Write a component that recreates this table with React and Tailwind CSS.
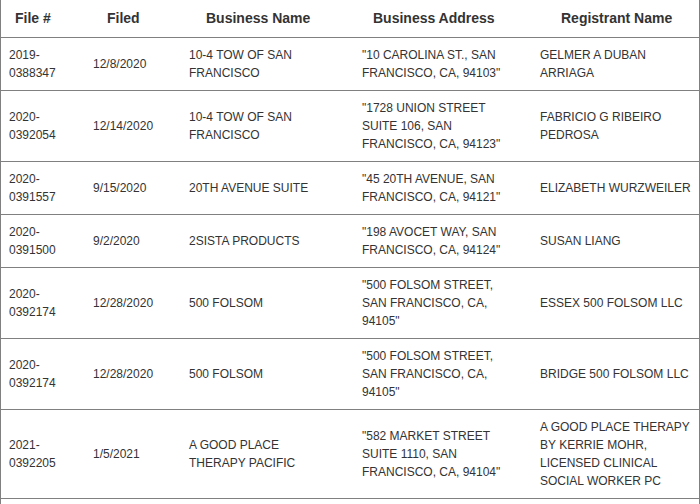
import React from "react";

const rows = [
  {
    file: "2019-0388347",
    filed: "12/8/2020",
    name: "10-4 TOW OF SAN FRANCISCO",
    address: '"10 CAROLINA ST., SAN FRANCISCO, CA, 94103"',
    registrant: "GELMER A DUBAN ARRIAGA",
  },
  {
    file: "2020-0392054",
    filed: "12/14/2020",
    name: "10-4 TOW OF SAN FRANCISCO",
    address: '"1728 UNION STREET SUITE 106, SAN FRANCISCO, CA, 94123"',
    registrant: "FABRICIO G RIBEIRO PEDROSA",
  },
  {
    file: "2020-0391557",
    filed: "9/15/2020",
    name: "20TH AVENUE SUITE",
    address: '"45 20TH AVENUE, SAN FRANCISCO, CA, 94121"',
    registrant: "ELIZABETH WURZWEILER",
  },
  {
    file: "2020-0391500",
    filed: "9/2/2020",
    name: "2SISTA PRODUCTS",
    address: '"198 AVOCET WAY, SAN FRANCISCO, CA, 94124"',
    registrant: "SUSAN LIANG",
  },
  {
    file: "2020-0392174",
    filed: "12/28/2020",
    name: "500 FOLSOM",
    address: '"500 FOLSOM STREET, SAN FRANCISCO, CA, 94105"',
    registrant: "ESSEX 500 FOLSOM LLC",
  },
  {
    file: "2020-0392174",
    filed: "12/28/2020",
    name: "500 FOLSOM",
    address: '"500 FOLSOM STREET, SAN FRANCISCO, CA, 94105"',
    registrant: "BRIDGE 500 FOLSOM LLC",
  },
  {
    file: "2021-0392205",
    filed: "1/5/2021",
    name: "A GOOD PLACE THERAPY PACIFIC",
    address: '"582 MARKET STREET SUITE 1110, SAN FRANCISCO, CA, 94104"',
    registrant: "A GOOD PLACE THERAPY BY KERRIE MOHR, LICENSED CLINICAL SOCIAL WORKER PC",
  },
];

const cols = "grid grid-cols-[84px_96px_173px_178px_167px]";

export default function App() {
  return (
    <div
      className="w-[700px] min-h-[504px] bg-white border-x border-[#808080] text-[#333333]"
      style={{ fontFamily: '"Liberation Sans", Arial, sans-serif' }}
    >
      <div className={`${cols} h-[38px] pb-[2px] border-b border-[#808080] items-center text-[14px] leading-[20px] font-bold`}>
        <div className="pl-[14px]">File #</div>
        <div className="pl-[22px]">Filed</div>
        <div className="pl-[25px]">Business Name</div>
        <div className="pl-[19px]">Business Address</div>
        <div className="pl-[29px]">Registrant Name</div>
      </div>
      {rows.map((r, i) => (
        <div
          key={i}
          className={`${cols} items-center border-b border-[#808080] text-[12px] leading-[18px] py-2`}
        >
          <div className="pl-2 pr-2">{r.file}</div>
          <div className="pl-2 pr-2">{r.filed}</div>
          <div className="pl-2 pr-[25px]">{r.name}</div>
          <div className="pl-2 pr-[20px]">{r.address}</div>
          <div className="pl-2 pr-[6px]">{r.registrant}</div>
        </div>
      ))}
    </div>
  );
}
